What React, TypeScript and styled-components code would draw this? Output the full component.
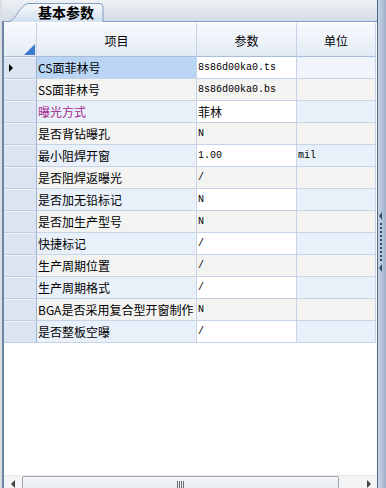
import styled, { createGlobalStyle } from 'styled-components';

const GlobalStyle = createGlobalStyle`
  html, body {
    margin: 0;
    padding: 0;
    width: 386px;
    height: 488px;
    overflow: hidden;
  }
  body {
    font-family: "Noto Sans CJK SC", "Liberation Sans", sans-serif;
    font-size: 12px;
    color: #000;
  }
`;

const Window = styled.div`
  display: flex;
  width: 386px;
  height: 488px;
  background: #d9dee5;
`;

const Main = styled.div`
  display: flex;
  flex-direction: column;
  flex: 1;
  padding-left: 2px;
`;

const TabStrip = styled.div`
  display: flex;
  align-items: flex-end;
  height: 21px;
  padding-left: 6px;
  background: linear-gradient(#eef1f5, #d3dbe6);
`;

const Tab = styled.div`
  position: relative;
  width: 96px;
  height: 20px;
  margin-bottom: -1px;
  svg {
    position: absolute;
    inset: 0;
  }
  span {
    position: relative;
    display: block;
    padding: 1px 0 0 30px;
    font-size: 14px;
    font-weight: bold;
    line-height: 18px;
  }
`;

const Frame = styled.div`
  display: flex;
  flex-direction: column;
  flex: 1;
  border-top: 1px solid #809fc6;
  border-left: 2px solid #6d84a2;
  background: #fff;
`;

const Grid = styled.div`
  display: grid;
  grid-template-columns: 33px 160px 100px 79px;
  padding-top: 1px;
`;

const HeadCell = styled.div`
  display: flex;
  align-items: center;
  justify-content: center;
  position: relative;
  height: 34px;
  padding-top: 1px;
  box-sizing: border-box;
  background: linear-gradient(#f8fafd, #e4ebf5);
  border-right: 1px solid #c3d2e6;
  border-bottom: 1px solid #a9bdd8;
`;

const Corner = styled.div`
  position: absolute;
  right: 1px;
  bottom: 1px;
  width: 0;
  height: 0;
  border-left: 11px solid transparent;
  border-bottom: 11px solid #3c7ad0;
`;

const RowHead = styled.div`
  display: flex;
  align-items: center;
  height: 21px;
  padding-left: 5px;
  background: #dbe4f0;
  border-right: 1px solid #9fb4cf;
  border-bottom: 1px solid #bfcde0;
  box-shadow: inset 0 1px 0 #eef3f9;
`;

const Marker = styled.i`
  width: 0;
  height: 0;
  border-top: 4px solid transparent;
  border-bottom: 4px solid transparent;
  border-left: 4px solid #000;
`;

const Cell = styled.div<{ $bg: string; $color?: string; $mono?: boolean }>`
  display: flex;
  align-items: center;
  height: 21px;
  padding-left: 1px;
  overflow: hidden;
  white-space: nowrap;
  background: ${(p) => p.$bg};
  color: ${(p) => p.$color || '#000'};
  border-right: 1px solid #c6d4e7;
  border-bottom: 1px solid #c6d4e7;
  font-family: ${(p) =>
    p.$mono ? '"Liberation Mono", monospace' : '"Noto Sans CJK SC", "Liberation Sans", sans-serif'};
  font-size: ${(p) => (p.$mono ? '10px' : '12px')};
`;

const Filler = styled.div`
  flex: 1;
  background: #fff;
`;

const HScroll = styled.div`
  display: flex;
  height: 12px;
  background: #f3f4f6;
  border-top: 1px solid #e4e6ea;
`;

const ScrollBtn = styled.div<{ $dir: 'left' | 'right' }>`
  display: flex;
  align-items: flex-start;
  width: ${(p) => (p.$dir === 'left' ? '18px' : '14px')};
  padding: 4px 0 0 ${(p) => (p.$dir === 'left' ? '7px' : '4px')};
  box-sizing: border-box;
  &::before {
    content: '';
    width: 0;
    height: 0;
    border-top: 4px solid transparent;
    border-bottom: 4px solid transparent;
    ${(p) =>
      p.$dir === 'left' ? 'border-right: 4px solid #444;' : 'border-left: 4px solid #444;'}
  }
`;

const Thumb = styled.div`
  display: flex;
  justify-content: center;
  width: 317px;
  height: 16px;
  box-sizing: border-box;
  border: 1px solid #a4a7ad;
  border-radius: 2px;
  background: linear-gradient(#f4f6f9, #e4e8ee);
  span {
    width: 7px;
    height: 8px;
    margin-top: 4px;
    background: repeating-linear-gradient(90deg, #6b6f76 0 1px, transparent 1px 2px);
  }
`;

const Track = styled.div`
  flex: 1;
`;

const Splitter = styled.div`
  display: flex;
  flex-direction: column;
  align-items: center;
  width: 9px;
  border-left: 1px solid #4f6786;
  background: linear-gradient(90deg, #c9d6e6, #9fb1c8);
  padding-top: 212px;
  box-sizing: border-box;
`;

const Nub = styled.i`
  width: 0;
  height: 0;
  margin-right: 3px;
  border-top: 4px solid transparent;
  border-bottom: 4px solid transparent;
  border-right: 3px solid #34506f;
`;

const Dots = styled.i`
  width: 2px;
  height: 38px;
  margin: 3px 3px 3px 0;
  background: repeating-linear-gradient(#2f4a6b 0 2px, transparent 2px 4px);
`;

interface IRow {
  name: string;
  value: string;
  unit?: string;
  accent?: boolean;
}

const rows: IRow[] = [
  { name: 'CS面菲林号', value: '8s86d00ka0.ts' },
  { name: 'SS面菲林号', value: '8s86d00ka0.bs' },
  { name: '曝光方式', value: '菲林', accent: true },
  { name: '是否背钻曝孔', value: 'N' },
  { name: '最小阻焊开窗', value: '1.00', unit: 'mil' },
  { name: '是否阻焊返曝光', value: '/' },
  { name: '是否加无铅标记', value: 'N' },
  { name: '是否加生产型号', value: 'N' },
  { name: '快捷标记', value: '/' },
  { name: '生产周期位置', value: '/' },
  { name: '生产周期格式', value: '/' },
  { name: 'BGA是否采用复合型开窗制作', value: 'N' },
  { name: '是否整板空曝', value: '/' },
];

const isCjk = (s: string) => /[\u4e00-\u9fff]/.test(s);

const App = () => {
  return (
    <>
      <GlobalStyle />
      <Window>
        <Main>
          <TabStrip>
            <Tab>
              <svg width="96" height="20" viewBox="0 0 96 20">
                <defs>
                  <linearGradient id="tabFill" x1="0" y1="0" x2="0" y2="1">
                    <stop offset="0" stopColor="#f7f9fc" />
                    <stop offset="1" stopColor="#d2e0f1" />
                  </linearGradient>
                </defs>
                <path
                  d="M0.5 20 C8 18 12 3 20 1.5 L91 1.5 Q95 1.5 95 5 L95 20"
                  fill="url(#tabFill)"
                  stroke="#7f9bc0"
                  strokeWidth="1"
                />
              </svg>
              <span>基本参数</span>
            </Tab>
          </TabStrip>
          <Frame>
            <Grid>
              <HeadCell>
                <Corner />
              </HeadCell>
              <HeadCell>项目</HeadCell>
              <HeadCell>参数</HeadCell>
              <HeadCell>单位</HeadCell>
              {rows.map((r, i) => {
                const odd = i % 2 === 1;
                const base = odd ? '#f3f3f2' : '#e9f0fa';
                return [
                  <RowHead key={`h${i}`}>{i === 0 && <Marker />}</RowHead>,
                  <Cell key={`n${i}`} $bg={i === 0 ? '#b9d5f3' : base} $color={r.accent ? '#a3288e' : undefined}>
                    {r.name}
                  </Cell>,
                  <Cell key={`v${i}`} $bg={odd ? base : '#fff'} $mono={!isCjk(r.value)}>
                    {r.value}
                  </Cell>,
                  <Cell key={`u${i}`} $bg={i === 0 ? '#f1f5fb' : base} $mono>
                    {r.unit}
                  </Cell>,
                ];
              })}
            </Grid>
            <Filler />
            <HScroll>
              <ScrollBtn $dir="left" />
              <Thumb>
                <span />
              </Thumb>
              <Track />
              <ScrollBtn $dir="right" />
            </HScroll>
          </Frame>
        </Main>
        <Splitter>
          <Nub />
          <Dots />
          <Nub />
        </Splitter>
      </Window>
    </>
  );
};

export default App;
